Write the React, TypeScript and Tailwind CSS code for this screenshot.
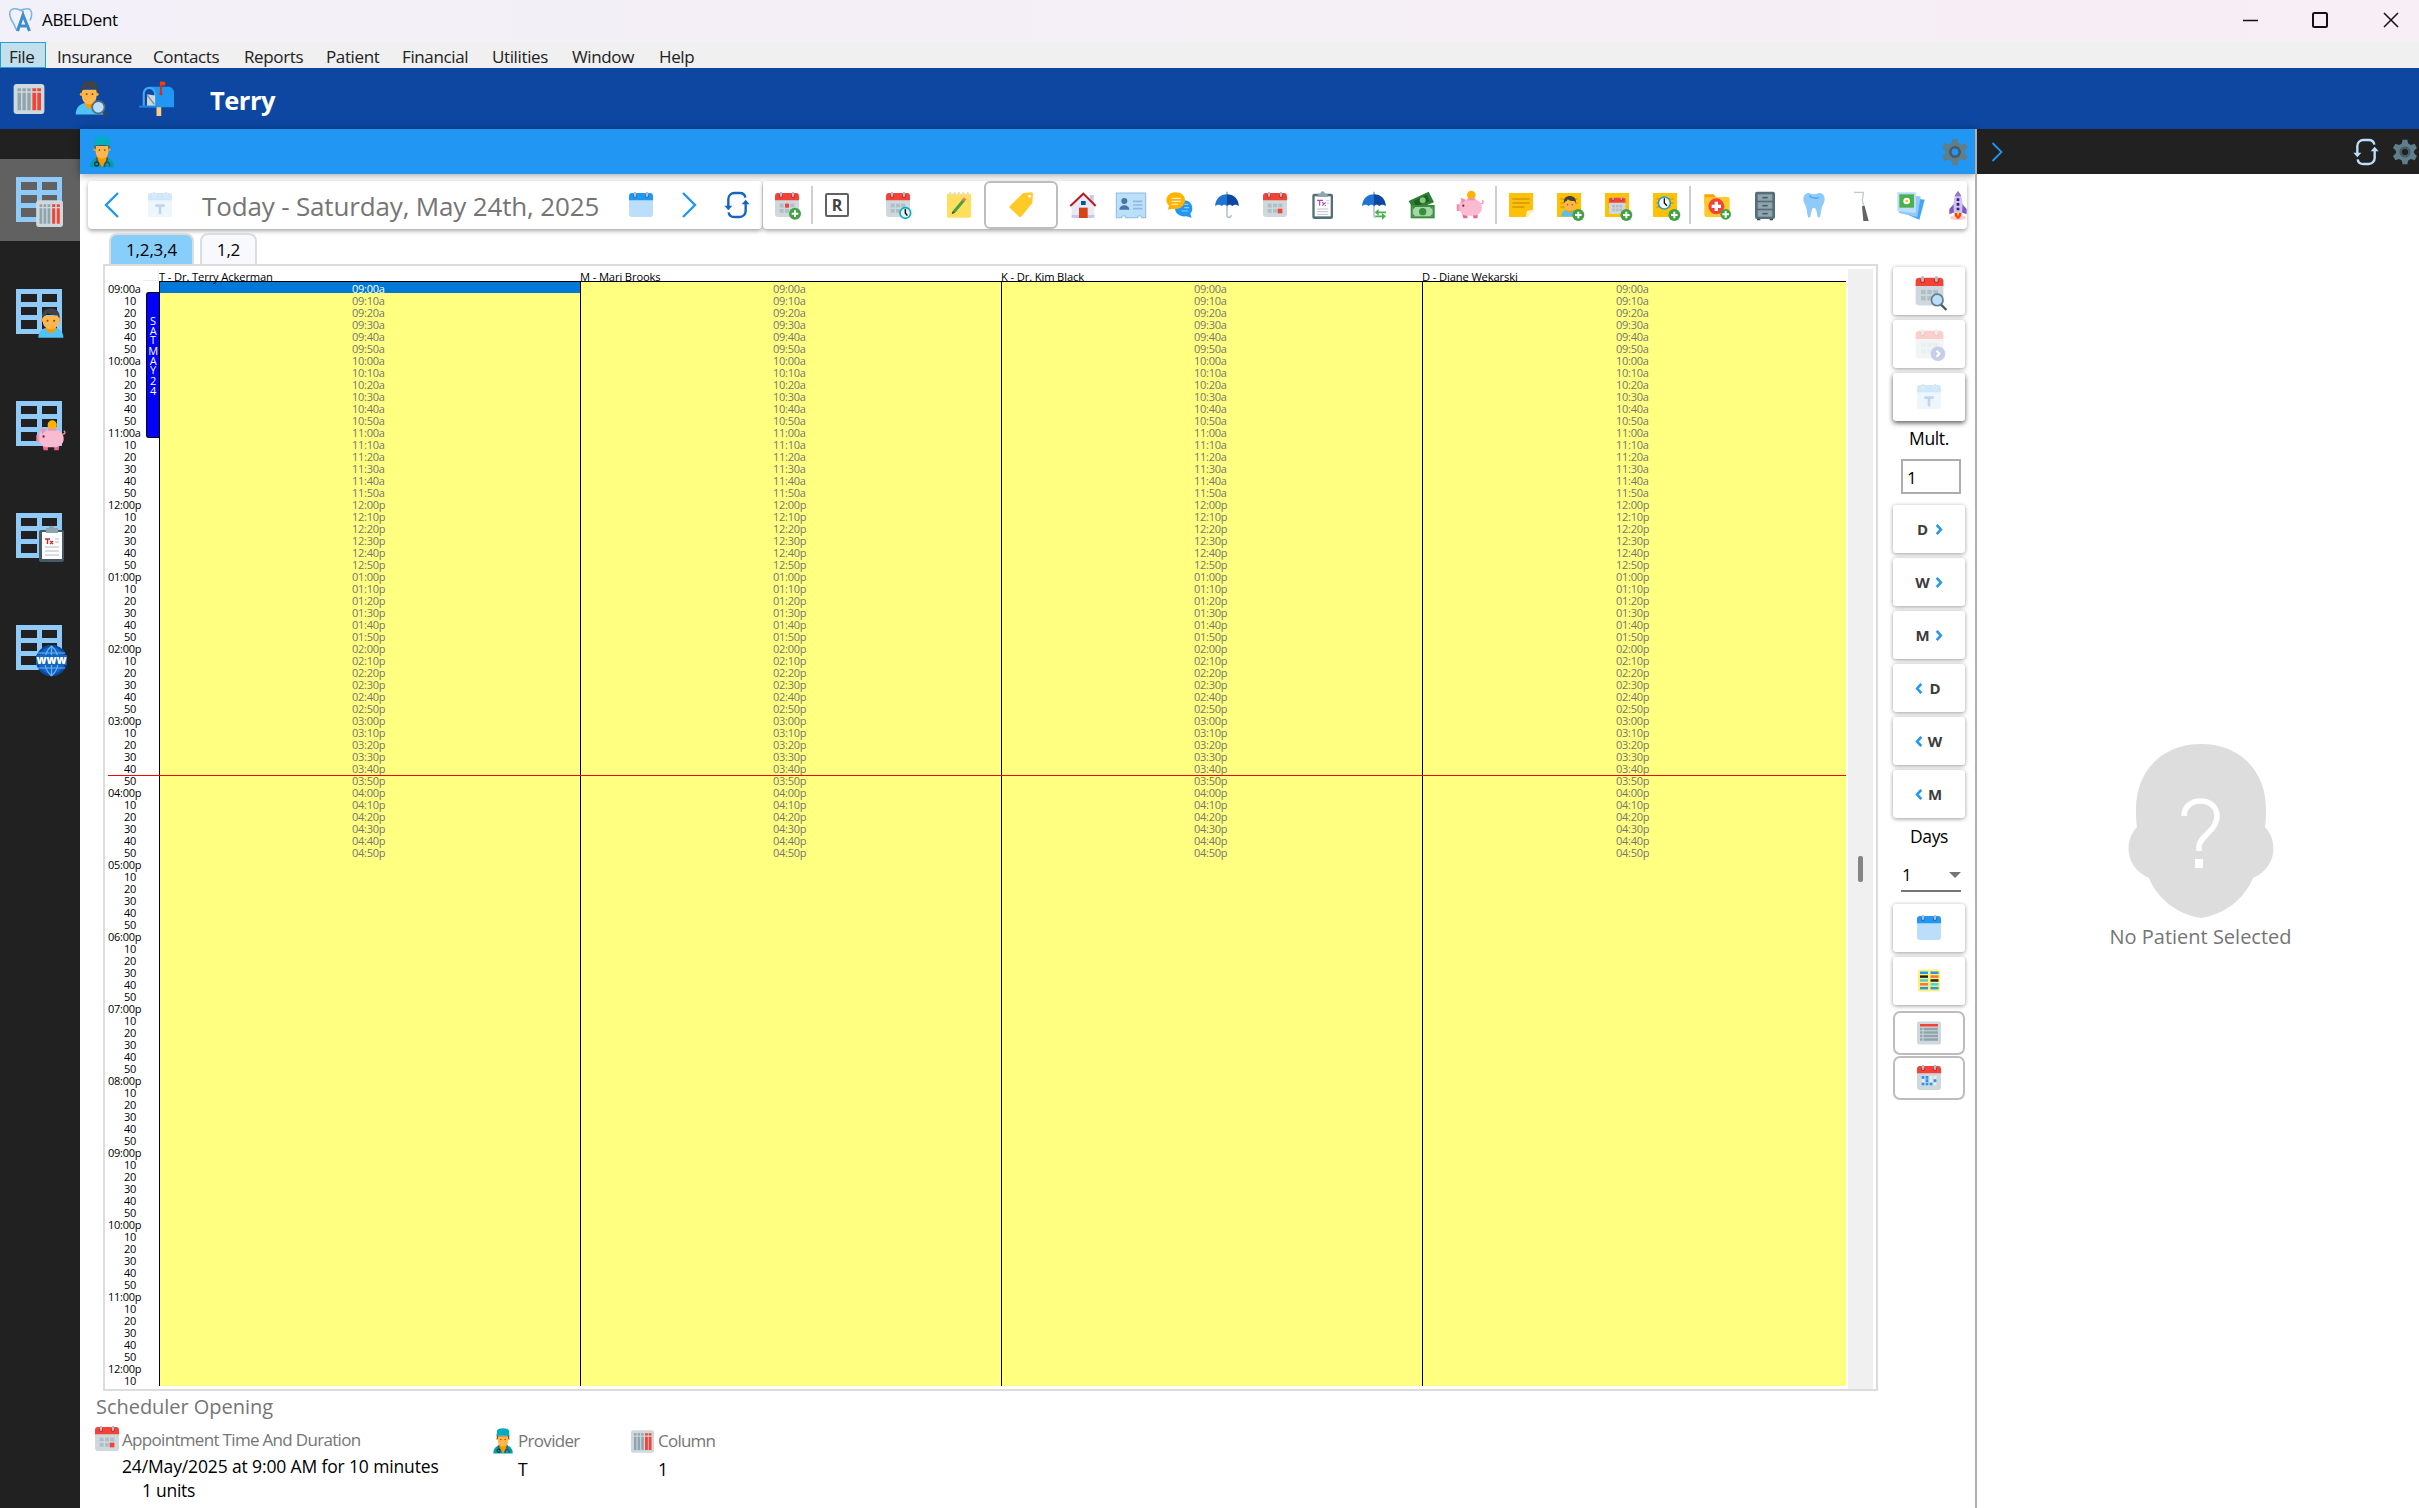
import React from "react";

type IconProps = { className?: string };

function Svg({ className = "size-8", children }: { className?: string; children: React.ReactNode }) {
  return (
    <svg viewBox="0 0 48 48" fill="none" className={`${className} shrink-0 overflow-visible`}>
      {children}
    </svg>
  );
}

/* ---------- icon parts ---------- */

function CalendarBase({ top = "#f44336", body = "#cfd8dc", ring = "#b0bec5", hole = "#b71c1c" }) {
  return (
    <>
      <path d="M6 38V14h36v24c0 2.200-1.800 4-4 4H10c-2.200 0-4-1.800-4-4z" fill={body} />
      <path d="M42 10v7H6v-7c0-2.200 1.800-4 4-4h28c2.200 0 4 1.800 4 4z" fill={top} />
      <circle cx="15" cy="10" r="3" fill={hole} />
      <circle cx="33" cy="10" r="3" fill={hole} />
      <rect x="13.200" y="4" width="3.600" height="8" rx="1.800" fill={ring} />
      <rect x="31.200" y="4" width="3.600" height="8" rx="1.800" fill={ring} />
    </>
  );
}

function CalendarCells({ color = "#b0bec5" }) {
  return (
    <g fill={color}>
      {[13, 21, 29].map((x) => (
        <React.Fragment key={x}>
          <rect x={x} y="22" width="6" height="5.500" />
          <rect x={x} y="30" width="6" height="5.500" />
        </React.Fragment>
      ))}
    </g>
  );
}

function PlusBadge({ cx = 37, cy = 37, r = 9 }) {
  return (
    <>
      <circle cx={cx} cy={cy} r={r} fill="#43a047" />
      <path d={`M${cx - 5} ${cy}h10M${cx} ${cy - 5}v10`} stroke="#fff" strokeWidth="3" />
    </>
  );
}

function PersonBody() {
  return (
    <>
      <path d="M5 46c0-9 5-14 12-15l7-1 7 1c7 1 12 6 12 15z" fill="#4fc3f7" />
      <path d="M17 26h14v8c-2 6-12 6-14 0z" fill="#ff9800" />
      <circle cx="12.500" cy="19" r="3" fill="#ffa726" />
      <circle cx="35.500" cy="19" r="3" fill="#ffa726" />
      <path d="M12 13h24v9c0 6-5 11-12 11s-12-5-12-11z" fill="#ffb74d" />
      <path d="M11 17C9 6 16 1 24 1s15 5 13 16l-3-5c-6 0-12-1-15-4-1 3-3 5-5 5z" fill="#424242" />
      <circle cx="19" cy="20" r="1.500" fill="#784719" />
      <circle cx="29" cy="20" r="1.500" fill="#784719" />
    </>
  );
}

/* ---------- icons ---------- */

function ColumnsIcon({ className }: IconProps) {
  return (
    <Svg className={className}>
      <rect x="3.500" y="4" width="41" height="40" rx="4" fill="#cfd8dc" />
      {[9, 15.5, 22].map((x) => (
        <path key={x} d={`M${x + 2} 9.5v4M${x + 2} 15.500v23.500`} stroke="#90a4ae" strokeWidth="4.500" />
      ))}
      {[28.5, 35].map((x) => (
        <path key={x} d={`M${x + 2.5} 9.5v4M${x + 2.5} 15.500v23.500`} stroke="#f44336" strokeWidth="5" />
      ))}
    </Svg>
  );
}

function PersonSearchIcon({ className }: IconProps) {
  return (
    <Svg className={className}>
      <path d="M1 46c0-9 5-13 10-15l9-2 9 2c6 2 10 6 10 15z" fill="#4fc3f7" />
      <path d="M14 26h12v8c-2 5-10 5-12 0z" fill="#ff9800" />
      <circle cx="9" cy="18" r="2.400" fill="#ffa726" />
      <circle cx="30" cy="18" r="2.400" fill="#ffa726" />
      <path d="M9.500 12h20v9c0 6-4 11-10 11s-10-5-10-11z" fill="#ffb74d" />
      <path d="M8.500 16C7 5 12 0 20 0s12.500 5 11 16l-2-5c-5 0-10-1-13-4-1 3-3 5-5 5z" fill="#424242" />
      <circle cx="16" cy="18" r="1.300" fill="#784719" />
      <circle cx="24" cy="18" r="1.300" fill="#784719" />
      <path d="M37 41l8 8" stroke="#37474f" strokeWidth="3.400" />
      <circle cx="32" cy="36" r="8.500" fill="#bbdefb" stroke="#546e7a" strokeWidth="2.500" />
    </Svg>
  );
}

function MailboxIcon({ className }: IconProps) {
  return (
    <Svg className={className}>
      <rect x="24" y="34" width="6.500" height="14" fill="#ffcc80" />
      <path d="M14 8h26c4.500 0 8 3.500 8 8v20H20z" fill="#2196f3" />
      <path d="M5 34V18c0-6 4-10 9-10s9 4 9 10v17z" fill="#42a5f5" />
      <path d="M8 34V18c0-4 2.500-7 6-7s6.500 3 6.500 7v16z" fill="#0d47a1" />
      <path d="M11 18l11 2v14H11z" fill="#cfd8dc" />
      <path d="M11 19l10 13" stroke="#78909c" strokeWidth="2" />
      <path d="M0 34h23v2.500H0z" fill="#1e88e5" />
      <path d="M30 17V1" stroke="#dd2c00" strokeWidth="2.600" />
      <circle cx="30" cy="17.500" r="2.200" fill="#dd2c00" />
      <path d="M28.700 1H36v5h-7.300z" fill="#ff3d00" />
    </Svg>
  );
}

function DoctorIcon({ className }: IconProps) {
  return (
    <Svg className={className}>
      <path d="M6 47c0-9 5-13 11-15h14c6 2 11 6 11 15z" fill="#00a0b0" />
      <path d="M16 29h16v4l-8 14-8-14z" fill="#ff9800" />
      <circle cx="13.500" cy="20" r="2.300" fill="#ffa726" />
      <circle cx="34.500" cy="20" r="2.300" fill="#ffa726" />
      <path d="M12.500 14h23l-.5 6h-22z" fill="#424242" />
      <path d="M14.500 15h19v9c0 5-4 10-9.500 10s-9.500-5-9.500-10z" fill="#ffb74d" />
      <path d="M13 4c2-5 20-5 22 0l1 11c-7-2-17-2-24 0z" fill="#00acc1" />
      <circle cx="20" cy="21" r="1.300" fill="#784719" />
      <circle cx="28" cy="21" r="1.300" fill="#784719" />
      <path d="M16 32l1 7M32 32l-1 6" stroke="#37474f" strokeWidth="2" />
      <circle cx="16" cy="42" r="3" stroke="#263238" strokeWidth="2" />
      <path d="M28 46c0-9 7-9 8 0" stroke="#37474f" strokeWidth="2" />
    </Svg>
  );
}

function GearIcon({ className }: IconProps) {
  return (
    <Svg className={className}>
      <path
        fillRule="evenodd"
        d="M20 3h8l1.500 6.500 4.500 2.500 6.500-2 4 7-5 4.800v4.400l5 4.800-4 7-6.500-2-4.500 2.500L28 45h-8l-1.500-6.500-4.500-2.500-6.500 2-4-7 5-4.800v-4.400L3.500 17l4-7 6.500 2 4.500-2.500zM24 18.500a5.500 5.500 0 1 0 0 11a5.500 5.500 0 0 0 0-11z"
        fill="#607d8b"
      />
      <circle cx="24" cy="24" r="7.500" stroke="#455a64" strokeWidth="4" />
    </Svg>
  );
}

function RefreshIcon({ className = "size-8 text-[#1565c0]" }: IconProps) {
  return (
    <Svg className={className}>
      <path
        d="M11 28V15c0-5 4-9 9-9h8c5 0 8 3 8.500 7M37 20v13c0 5-4 9-9 9h-8c-5 0-8-3-8.500-7"
        stroke="currentColor"
        strokeWidth="3.600"
      />
      <path d="M5 25h12l-6 7zM31 23h12l-6-7z" fill="currentColor" />
    </Svg>
  );
}

function ChevronIcon({ left = false, className = "size-8 text-[#2196f3]" }: { left?: boolean; className?: string }) {
  return (
    <Svg className={className}>
      <path d={left ? "M33 6L15 24l18 18" : "M15 6l18 18-18 18"} stroke="currentColor" strokeWidth="3.600" />
    </Svg>
  );
}

function BlueCalendarIcon({ className }: IconProps) {
  return (
    <Svg className={className}>
      <CalendarBase top="#2196f3" body="#bbdefb" hole="#1565c0" />
    </Svg>
  );
}

function TodayIcon({ className = "size-8" }: IconProps) {
  return (
    <Svg className={className}>
      <g opacity="0.26">
        <CalendarBase top="#42a5f5" body="#bbdefb" ring="#90a4ae" hole="#90caf9" />
        <path d="M17 25h14M24 25v13" stroke="#1565c0" strokeWidth="4" />
      </g>
    </Svg>
  );
}

function CalendarAddIcon() {
  return (
    <Svg>
      <CalendarBase />
      <CalendarCells />
      <rect x="21" y="22" width="6" height="6" fill="#f44336" />
      <PlusBadge cx={36} cy={37} />
    </Svg>
  );
}

function CalendarClockIcon() {
  return (
    <Svg>
      <CalendarBase />
      <CalendarCells />
      <circle cx="35" cy="36" r="8" fill="#eee" stroke="#00acc1" strokeWidth="2.500" />
      <path d="M35 30v6l3 4" stroke="#111" strokeWidth="2.200" />
    </Svg>
  );
}

function CalendarDayIcon({ className }: IconProps) {
  return (
    <Svg className={className}>
      <CalendarBase />
      <CalendarCells />
      <rect x="28" y="29.500" width="7" height="7" fill="#f44336" />
    </Svg>
  );
}

function RIcon() {
  return (
    <span className="flex size-6 items-center justify-center rounded-[2px] border-2 border-[#616161] text-[16px] leading-none font-bold text-[#424242]">
      R
    </span>
  );
}

function NotepadIcon() {
  return (
    <Svg>
      <rect x="6" y="7" width="36" height="36" rx="2" fill="#ffe05c" />
      {[11, 17.5, 24, 30.5, 37].map((x) => (
        <rect key={x} x={x - 1.5} y="4" width="3" height="7" rx="1.500" fill="#e8dfb0" />
      ))}
      <path d="M16 35l15-18" stroke="#43a047" strokeWidth="4.500" />
      <path d="M30 18l3-4" stroke="#e57373" strokeWidth="4.500" />
      <path d="M13 38l1.500-5 3 3z" fill="#37474f" />
    </Svg>
  );
}

function TagIcon() {
  return (
    <Svg>
      <path d="M27 6l12-1c2 0 3 1 3 3l-1 13-16 20c-1 1.500-3 1.500-4 .3L7.500 29c-1-1-1-2.800.2-4z" fill="#ffca28" />
      <circle cx="37" cy="11" r="2.200" fill="#fff" />
    </Svg>
  );
}

function HouseIcon() {
  return (
    <Svg>
      <path d="M34 9h6v12h-6z" fill="#c5cae9" />
      <path d="M24 8L7 24v19h34V24z" fill="#e8eaf6" />
      <path d="M7 39h34v4.500H7z" fill="#c5cae9" />
      <path d="M18 28h13v15.500H18z" fill="#d84315" />
      <path d="M21 18h7v6h-7z" fill="#01579b" />
      <path d="M5 25.500L24.500 7L43 25.500" stroke="#b71c1c" strokeWidth="3" />
    </Svg>
  );
}

function IdCardIcon() {
  return (
    <Svg>
      <path d="M2 6h44v37h-6c0-4-6-4-6 0H16c0-4-6-4-6 0H2z" fill="#bbe1fa" stroke="#8fbde0" strokeWidth="1.600" />
      <circle cx="14" cy="18" r="4.500" fill="#4a74a8" />
      <path d="M6.500 31c0-9 15-9 15 0z" fill="#4a74a8" />
      <path d="M27 18.500h14M27 24h14M27 29.500h14" stroke="#90b8e0" strokeWidth="2.400" />
    </Svg>
  );
}

function ChatIcon() {
  return (
    <Svg>
      <path d="M31 17c8 0 13 5 13 12 0 4-2 7-3 8l2 6-8-2c-10 1-17-4-17-12s5-12 13-12z" fill="#2196f3" />
      <path d="M32 23h6M32 28h7M28 33h10" stroke="#90caf9" strokeWidth="1.800" />
      <path d="M19 5c8 0 14 5 14 12s-6 13-14 13c-2 0-3 0-5-.5L7 31l2-6c-2-2-4-5-4-8C5 10 11 5 19 5z" fill="#ffb300" />
      <path d="M13 14h14M13 18.500h14M13 23h10" stroke="#ffecb3" strokeWidth="1.800" />
    </Svg>
  );
}

function UmbrellaIcon({ exchange = false }: { exchange?: boolean }) {
  return (
    <Svg>
      <path d="M24 22v17c0 5 6 5 6 0" stroke="#b0bec5" strokeWidth="2.200" />
      <path d="M24 4v5" stroke="#78909c" strokeWidth="1.800" />
      <path d="M6 26C7 14 14 8 24 8v18c-2-3-6-3-8 0-2-3-7-3-10 0z" fill="#1e74d0" />
      <path d="M42 26C41 14 34 8 24 8v18c2-3 6-3 8 0 2-3 7-3 10 0z" fill="#0d47a1" />
      {exchange && (
        <>
          <path d="M26 31h20v14H26z" fill="#fff" />
          <path d="M29 35h13M26 41h13" stroke="#4caf50" strokeWidth="2.600" />
          <path d="M31 30v10l-6-5zM36 36v10l6-5z" fill="#4caf50" />
        </>
      )}
    </Svg>
  );
}

function ClipboardIcon({ className }: IconProps) {
  return (
    <Svg className={className}>
      <rect x="8" y="7" width="31" height="38" rx="3" fill="#546e7a" />
      <rect x="11.500" y="11" width="24" height="30" fill="#fff" />
      <path d="M16 7h4c0-5 7-5 7 0h4v5H16z" fill="#90a4ae" />
      <path d="M15 17h9M19 17v8M23 20l5 5M28 20l-5 5" stroke="#ab47bc" strokeWidth="1.800" />
      <path d="M15 30h17M15 34h17M15 38h17M29 17h4M30 21h3" stroke="#b0bec5" strokeWidth="1.300" />
    </Svg>
  );
}

function MoneyIcon() {
  return (
    <Svg>
      <path d="M4 18L34 4l8 16-30 12z" fill="#2e7d32" />
      <path d="M12 18L31 9l4 9-20 8z" fill="#1b5e20" />
      <circle cx="25" cy="17" r="4.500" fill="#81c784" />
      <rect x="7" y="24" width="36" height="20" fill="#388e3c" />
      <rect x="10" y="27" width="30" height="14" fill="#a5d6a7" />
      <circle cx="25" cy="34" r="5.500" fill="#388e3c" />
      <path d="M10 27h4l-4 4zM40 27h-4l4 4zM10 41h4l-4-4zM40 41h-4l4-4z" fill="#388e3c" />
    </Svg>
  );
}

function PiggyParts() {
  return (
    <>
      <circle cx="26" cy="9" r="6.500" fill="#ffb300" />
      <path d="M12 35h8v9h-6zM28 35h8l-1 9h-6z" fill="#f06292" />
      <path d="M40 22c4 0 5-3 2-5" stroke="#f48fb1" strokeWidth="2" />
      <path
        d="M10 14l7 3c3-2 6-2 10-2 9 0 15 6 15 13s-6 12-14 12H19c-4 0-7-2-9-6l-5-2v-8l4-2c0-2 1-4 2-5z"
        fill="#f8bbd0"
      />
      <path d="M10 13l8 3-6 6zM4 23h4v10H4z" fill="#f48fb1" />
      <path d="M20 14h12v3H20z" fill="#f48fb1" />
      <circle cx="14" cy="25" r="1.600" fill="#880e4f" />
    </>
  );
}

function PiggyIcon() {
  return (
    <Svg>
      <PiggyParts />
    </Svg>
  );
}

function NoteBase() {
  return (
    <>
      <path d="M6 6h36v36H6z" fill="#ffc107" />
      <path d="M11 15h26M11 21h26M11 27h20" stroke="#c69000" strokeWidth="1.800" />
    </>
  );
}

function NoteIcon() {
  return (
    <Svg>
      <path d="M6 6h36v27l-9 9H6z" fill="#ffc107" />
      <path d="M11 15h26M11 21h26M11 27h18" stroke="#b98500" strokeWidth="1.800" />
      <path d="M31 42l2-9 9-2v2l-9 9z" fill="#fff3c4" />
    </Svg>
  );
}

function NotePersonIcon() {
  return (
    <Svg>
      <NoteBase />
      <g transform="translate(9 10) scale(0.68)">
        <PersonBody />
      </g>
      <PlusBadge cx={38} cy={39} />
    </Svg>
  );
}

function NoteCalendarIcon() {
  return (
    <Svg>
      <NoteBase />
      <g transform="translate(8 9) scale(0.68)">
        <CalendarBase />
        <CalendarCells />
      </g>
      <PlusBadge cx={38} cy={39} />
    </Svg>
  );
}

function NoteClockIcon() {
  return (
    <Svg>
      <NoteBase />
      <circle cx="23" cy="21" r="9" fill="#f5f5f5" stroke="#26a0c0" strokeWidth="2.500" />
      <path d="M23 14v7l4 4" stroke="#111" strokeWidth="2" />
      <PlusBadge cx={38} cy={39} />
    </Svg>
  );
}

function FolderPlusIcon() {
  return (
    <Svg>
      <path d="M5 8h14l4 5h19v10H5z" fill="#ffa000" />
      <rect x="5" y="12" width="38" height="30" rx="3" fill="#ffca28" />
      <circle cx="23" cy="26" r="12" fill="#f44336" />
      <path d="M16 26h14M23 19v14" stroke="#fff" strokeWidth="5" />
      <PlusBadge cx={37} cy={38} r={8} />
    </Svg>
  );
}

function CabinetIcon() {
  return (
    <Svg>
      <rect x="9" y="4" width="30" height="41" rx="3" fill="#546e7a" />
      {[8, 20, 32].map((y) => (
        <g key={y}>
          <rect x="13" y={y} width="22" height="9.500" fill="#90a4ae" />
          <path d={`M20 ${y + 5}h8`} stroke="#455a64" strokeWidth="2.400" />
        </g>
      ))}
      <path d="M12 45h5v2h-5zM31 45h5v2h-5z" fill="#37474f" />
    </Svg>
  );
}

function ToothIcon() {
  return (
    <Svg>
      <path
        d="M16 6c3 0 5 2 8 2s5-2 8-2c5 0 8 4 8 9 0 6-4 9-5 16-1 5-1 12-4 12s-2-15-7-15-4 15-7 15-3-7-4-12c-1-7-5-10-5-16 0-5 3-9 8-9z"
        fill="#90caf9"
      />
      <path d="M17 10c3 3 8 5 14 3" stroke="#42a5f5" strokeWidth="2" />
    </Svg>
  );
}

function ProbeIcon() {
  return (
    <Svg>
      <path d="M12 5h14c1 5-3 10-1 15l3 8" stroke="#c4c9cc" strokeWidth="2" />
      <path d="M24 25l4 1 6 22h-8z" fill="#616161" />
    </Svg>
  );
}

function PhotosIcon() {
  return (
    <Svg>
      <path d="M20 12l26 4-8 30-26-11z" fill="#42a5f5" />
      <path d="M12 10l28 1-5 31-28-6z" fill="#90caf9" />
      <path d="M5 5h28v30l-5 1-23-3z" fill="#bbdefb" />
      <rect x="8" y="8" width="22" height="20" fill="#4caf50" />
      <circle cx="19" cy="18" r="5" fill="#fff" />
      <circle cx="19" cy="18" r="2" fill="#ffc107" />
    </Svg>
  );
}

function RocketIcon() {
  return (
    <Svg>
      <ellipse cx="24" cy="43" rx="12" ry="4" fill="#ffcdd2" />
      <path d="M18 22l-7 8v8l8-3zM30 22l7 8v8l-8-3z" fill="#7e57c2" />
      <path d="M24 3c6 7 8 15 6 33H18C16 18 18 10 24 3z" fill="#d1c4e9" />
      <path d="M24 3c2 2.500 4 5.500 5 8H19c1-2.500 3-5.500 5-8z" fill="#9575cd" />
      <path d="M24 14v4M24 21v4M24 28v4" stroke="#311b92" strokeWidth="4" />
      <path d="M19 36h10c1 4-3 8-5 9-2-1-6-5-5-9z" fill="#ff3d00" />
      <path d="M22 36h4l-2 6z" fill="#ffca28" />
    </Svg>
  );
}

function CalendarSearchIcon({ className = "size-[37px]" }: IconProps) {
  return (
    <Svg className={className}>
      <CalendarBase />
      <CalendarCells />
      <path d="M38 40l8 8" stroke="#455a64" strokeWidth="3" />
      <circle cx="34" cy="35" r="7.500" fill="#bbdefb" stroke="#607d8b" strokeWidth="2.200" />
    </Svg>
  );
}

function CalendarNextIcon({ className = "size-[37px]" }: IconProps) {
  return (
    <Svg className={className}>
      <g opacity="0.25">
        <CalendarBase />
        <CalendarCells />
      </g>
      <circle cx="35" cy="36" r="9.500" fill="#c5cfe8" />
      <path d="M33 32l4 4-4 4" stroke="#fff" strokeWidth="2.600" />
    </Svg>
  );
}

function ColorColumnsIcon() {
  const rows = [
    ["#2196f3", "#2196f3"],
    ["#212121", "#ff7043"],
    ["#4dd0e1", "#212121"],
    ["#ff7043", "#4dd0e1"],
    ["#2196f3", "#2196f3"],
  ];
  return (
    <Svg className="size-6">
      <rect x="2" y="1" width="44" height="44" rx="4" fill="#fff176" />
      {rows.map(([a, b], i) => (
        <g key={i}>
          <rect x="6" y={5 + i * 7.7} width="16" height="5" fill={a} />
          <rect x="27" y={5 + i * 7.7} width="16" height="5" fill={b} />
        </g>
      ))}
    </Svg>
  );
}

function ListIcon() {
  return (
    <Svg className="size-6">
      <rect x="0" y="1" width="48" height="46" rx="4" fill="#cfd8dc" />
      <rect x="6" y="6" width="36" height="5" fill="#f44336" />
      {[13, 20, 27, 34].map((y) => (
        <path key={y} d={`M6 ${y + 3}h5M13 ${y + 3}h29`} stroke="#90a4ae" strokeWidth="5" />
      ))}
    </Svg>
  );
}

function MonthIcon() {
  return (
    <Svg className="size-8">
      <CalendarBase />
      <g fill="#2196f3">
        <path d="M13 21h4v4h-4zM19 21h4v4h-4zM19 26h4v4h-4zM13 31h4v4h-4zM19 31h4v4h-4zM25 31h4v4h-4zM31 26h4v4h-4z" />
      </g>
      <path d="M25 21h4v4h-4zM31 21h4v4h-4zM13 26h4v4h-4zM25 26h4v4h-4zM31 31h4v4h-4z" fill="#eceff1" />
    </Svg>
  );
}

function LogoIcon() {
  return (
    <Svg className="size-6">
      <path
        d="M9 31C2 22-1 9 4 4c5-4 11-3 18 0 3 1 5 3 8 4M21 4c8 0 15-5 21-1 5 4 4 14 0 22M9 31c3 4 3 10 7 14"
        stroke="#7bb6e0"
        strokeWidth="3.200"
      />
      <path d="M17 46l11-32 13 32M22 36h15" stroke="#3b8fd0" strokeWidth="6" />
    </Svg>
  );
}

/* ---------- side navigation ---------- */

function NavGrid({ children }: { children: React.ReactNode }) {
  return (
    <svg viewBox="0 0 54 52" fill="none" className="h-[52px] w-[54px]">
      <path
        fillRule="evenodd"
        fill="#90caf9"
        d="M0 0h46v45H0zM5 5v8h16V5zM26 5v8h15V5zM5 18v8h16v-8zM26 18v8h15v-8zM5 31v9h16v-9zM26 31v9h15v-9z"
      />
      {children}
    </svg>
  );
}

const navItems = [
  <NavGrid key="cols">
    <g transform="translate(17.500 20.500) scale(0.67)">
      <rect x="4" y="4" width="40" height="40" rx="4" fill="#cfd8dc" />
      <path d="M11 10v4M17 10v4M23 10v4M11 16v23M17 16v23M23 16v23" stroke="#90a4ae" strokeWidth="4" />
      <path d="M30 10v4M37 10v4M30 16v23M37 16v23" stroke="#f44336" strokeWidth="4.500" />
    </g>
  </NavGrid>,
  <NavGrid key="person">
    <g transform="translate(19 18.500) scale(0.66)">
      <PersonBody />
    </g>
  </NavGrid>,
  <NavGrid key="piggy">
    <g transform="translate(17.500 17.500) scale(0.72)">
      <PiggyParts />
    </g>
  </NavGrid>,
  <NavGrid key="clip">
    <rect x="23" y="17" width="25" height="32" rx="2" fill="#455a64" />
    <rect x="26" y="19" width="20" height="27" fill="#fff" />
    <path d="M30 15h3c0-3 5-3 5 0h4v5H30z" fill="#90a4ae" />
    <path d="M29 26h5M31.500 26v5M34 28l3 3M37 28l-3 3" stroke="#c62828" strokeWidth="1.400" />
    <path d="M39 26h4M39 29h4M29 34h14M29 38h14M29 42h14" stroke="#b0bec5" strokeWidth="1.200" />
  </NavGrid>,
  <NavGrid key="www">
    <circle cx="35.500" cy="35.500" r="15.500" fill="#1565c0" />
    <circle cx="35.500" cy="35.500" r="14.500" stroke="#0d47a1" strokeWidth="2" />
    <path
      d="M35.500 21v30M22 28h27M22 43h27M35.500 21c-9 8-9 22 0 30M35.500 21c9 8 9 22 0 30"
      stroke="#64b5f6"
      strokeWidth="1.200"
    />
    <rect x="20" y="30" width="31" height="10" fill="#1565c0" />
    <text
      x="35.500"
      y="38.500"
      textAnchor="middle"
      fontSize="12"
      fontWeight="800"
      fill="#fff"
      textLength="30"
      lengthAdjust="spacingAndGlyphs"
    >
      www
    </text>
  </NavGrid>,
];

/* ---------- schedule ---------- */

const pad = (n: number) => String(n).padStart(2, "0");
const clock = (slot: number) => {
  const hour = 9 + Math.floor(slot / 6);
  return `${pad(hour > 12 ? hour - 12 : hour)}:${pad((slot % 6) * 10)}${hour >= 12 ? "p" : "a"}`;
};
const sideLabels = Array.from({ length: 92 }, (_, i) => {
  if (i % 6) return String((i % 6) * 10);
  return i === 90 ? "12:00p" : clock(i);
});
const openSlots = Array.from({ length: 48 }, (_, i) => clock(i));
const providers = ["T - Dr. Terry Ackerman", "M - Mari Brooks", "K - Dr. Kim Black", "D - Diane Wekarski"];

function Schedule() {
  return (
    <div className="relative flex h-[1127px] w-[1775px] border-2 border-[#dcdcdc] bg-white text-[11px] tracking-[-0.025em]">
      <div className="relative w-[54px] shrink-0 pt-[17px] font-medium text-black">
        {sideLabels.map((label, i) => (
          <div key={i} className={label.length > 2 ? "h-3 pl-[3px] leading-3" : "h-3 pl-[19px] leading-3"}>
            {label}
          </div>
        ))}
        <div className="absolute top-[3px] right-0 h-3 w-4 border-r border-b border-[#ececec]" />
        <div className="absolute top-[26px] right-0 flex h-[146px] w-[13px] flex-col items-center rounded-l-[3px] border border-r-0 border-black bg-[#0000ff] pt-[23px] text-[11px] text-white">
          {["S", "A", "T", "M", "A", "Y", "2", "4"].map((c, i) => (
            <span key={i} className={i === 3 || i === 6 ? "mt-px h-[10px] leading-[10px]" : "h-[9.500px] leading-[10px]"}>
              {c}
            </span>
          ))}
        </div>
      </div>
      <div className="flex w-[1687px] shrink-0">
        {providers.map((name, c) => (
          <div key={name} className={c === 3 ? "w-[424px]" : "w-[421px]"}>
            <div className="h-[15px] pt-[3px] text-[11.200px] leading-4 font-medium tracking-[-0.012em] whitespace-nowrap text-black">
              {name}
            </div>
            <div
              className={
                c === 3
                  ? "h-[1105px] border-t border-l border-black bg-[#ffff80] pl-[193px] text-[#757575]"
                  : "h-[1105px] border-t border-l border-black bg-[#ffff80] pl-[192px] text-[#757575]"
              }
            >
              {openSlots.map((t, i) => {
                if (i === 0)
                  return (
                    <div
                      key={t}
                      className={
                        c === 0
                          ? "mb-[2px] -ml-[192px] h-[11px] bg-[#0078d7] pl-[192px] leading-[14px] text-white"
                          : "mb-[2px] h-[11px] leading-[14px]"
                      }
                    >
                      {t}
                    </div>
                  );
                return (
                  <div key={t} className="h-3 leading-3">
                    {t}
                  </div>
                );
              })}
            </div>
          </div>
        ))}
      </div>
      <div className="mt-[3px] ml-[2px] flex h-[1120px] w-[25px] items-center justify-center bg-[#f0f0f0]">
        <div className="mt-[80px] h-[26px] w-[5px] rounded-[2px] bg-[#858585]" />
      </div>
      <div className="absolute top-[509px] left-[3px] h-px w-[1738px] bg-[#ff0000]" />
    </div>
  );
}

/* ---------- toolbar ---------- */

function Cell({ className = "w-12", children }: { className?: string; children: React.ReactNode }) {
  return <div className={`${className} flex h-12 shrink-0 items-center justify-center`}>{children}</div>;
}

function Sep({ className = "" }: IconProps) {
  return <div className={`${className} h-[38px] w-[2px] shrink-0 bg-[#cfcfcf]`} />;
}

function Toolbar() {
  return (
    <div className="ml-2 flex h-12">
      <div className="flex h-12 w-[674px] items-center rounded bg-white shadow-[0_2px_4px_rgba(0,0,0,0.35)]">
        <Cell><ChevronIcon left /></Cell>
        <Cell><TodayIcon /></Cell>
        <div className="w-[433px] pt-[2px] pl-[18px] text-[26px] leading-9 tracking-[-0.006em] whitespace-nowrap text-[#757575]">
          Today - Saturday, May 24th, 2025
        </div>
        <Cell><BlueCalendarIcon /></Cell>
        <Cell><ChevronIcon /></Cell>
        <Cell><RefreshIcon /></Cell>
      </div>
      <div className="ml-px h-12 w-[1204px] rounded bg-white shadow-[0_2px_4px_rgba(0,0,0,0.35)]">
        <div className="flex h-12 w-[1204px] items-center overflow-hidden">
          <Cell><CalendarAddIcon /></Cell>
          <Sep />
          <Cell><RIcon /></Cell>
          <Cell className="ml-[13px] w-12"><CalendarClockIcon /></Cell>
          <Cell className="ml-[13px] w-12"><NotepadIcon /></Cell>
          <div className="ml-px flex h-12 w-[74px] shrink-0 items-center justify-center rounded-md border-2 border-[#bdbdbd]">
            <TagIcon />
          </div>
          <Cell className="ml-px w-12"><HouseIcon /></Cell>
          <Cell><IdCardIcon /></Cell>
          <Cell><ChatIcon /></Cell>
          <Cell><UmbrellaIcon /></Cell>
          <Cell><CalendarDayIcon /></Cell>
          <Cell><ClipboardIcon /></Cell>
          <Cell className="ml-[3px] w-12"><UmbrellaIcon exchange /></Cell>
          <Cell><MoneyIcon /></Cell>
          <Cell><PiggyIcon /></Cell>
          <Sep className="ml-px" />
          <Cell><NoteIcon /></Cell>
          <Cell><NotePersonIcon /></Cell>
          <Cell><NoteCalendarIcon /></Cell>
          <Cell><NoteClockIcon /></Cell>
          <Sep />
          <Cell className="ml-[2px] w-12"><FolderPlusIcon /></Cell>
          <Cell><CabinetIcon /></Cell>
          <Cell className="ml-px w-12"><ToothIcon /></Cell>
          <Cell><ProbeIcon /></Cell>
          <Cell><PhotosIcon /></Cell>
          <Cell><RocketIcon /></Cell>
        </div>
      </div>
    </div>
  );
}

/* ---------- right tool column ---------- */

function ToolButton({ className = "", children }: { className?: string; children: React.ReactNode }) {
  return (
    <div
      className={`${className} flex h-12 w-[72px] items-center justify-center rounded-[3px] bg-white shadow-[0_1px_4px_rgba(0,0,0,0.4)]`}
    >
      {children}
    </div>
  );
}

function SmallChevron({ left = false }: { left?: boolean }) {
  return (
    <svg viewBox="0 0 8 12" fill="none" className="h-[11px] w-2">
      <path d={left ? "M6.500 1L2 6l4.500 5" : "M1.500 1L6 6l-4.500 5"} stroke="#2196f3" strokeWidth="2.800" />
    </svg>
  );
}

function ToolColumn() {
  return (
    <div className="ml-[15px] flex w-[72px] flex-col items-center pt-[3px] text-black">
      <ToolButton><CalendarSearchIcon /></ToolButton>
      <ToolButton className="mt-[5px]"><CalendarNextIcon /></ToolButton>
      <div className="mt-[5px] flex h-12 w-[72px] items-center justify-center rounded-[3px] bg-white shadow-[0_2px_5px_rgba(0,0,0,0.65)]">
        <TodayIcon />
      </div>
      <div className="mt-[5px] h-6 text-[17.500px] leading-6 tracking-[-0.02em]">Mult.</div>
      <div className="mt-[9px] ml-[4px] h-[35px] w-[60px] border-2 border-[#abadb3] pl-[4px] text-[17px] leading-[33px]">1</div>
      <div className="mt-[11px] flex flex-col gap-[5px] text-[15px] font-bold text-[#3c3c3c]">
        {["D", "W", "M"].map((c) => (
          <ToolButton key={c} className="gap-[5px]">
            <span className="w-[15px] text-center">{c}</span>
            <SmallChevron />
          </ToolButton>
        ))}
        {["D", "W", "M"].map((c) => (
          <ToolButton key={c} className="gap-[4px]">
            <SmallChevron left />
            <span className="w-[16px] text-center">{c}</span>
          </ToolButton>
        ))}
      </div>
      <div className="mt-[6px] h-6 text-[17.500px] leading-6 tracking-[-0.02em]">Days</div>
      <div className="mt-[11px] ml-[4px] flex h-[33px] w-[60px] items-center justify-between border-b-2 border-[#757575] pt-px pl-px text-[17px]">
        <span>1</span>
        <svg viewBox="0 0 12 6" className="h-[6px] w-3">
          <path d="M0 0h12L6 6z" fill="#757575" />
        </svg>
      </div>
      <ToolButton className="mt-[12px]"><BlueCalendarIcon /></ToolButton>
      <ToolButton className="mt-[5px]"><ColorColumnsIcon /></ToolButton>
      <div className="mt-[6px] flex h-[44px] w-[72px] items-center justify-center rounded-[7px] border-2 border-[#bdbdbd]">
        <ListIcon />
      </div>
      <div className="mt-px flex h-[44px] w-[72px] items-center justify-center rounded-[7px] border-2 border-[#bdbdbd]">
        <MonthIcon />
      </div>
    </div>
  );
}

/* ---------- footer ---------- */

function Details() {
  return (
    <div className="pt-px pl-[11px] text-[17px] tracking-[-0.04em] text-black">
      <div className="pl-[5px] text-[20px] leading-[30px] tracking-[-0.002em] text-[#757575]">Scheduler Opening</div>
      <div className="flex whitespace-nowrap">
        <div className="flex w-[396px] pt-px">
          <CalendarDayIcon />
          <div className="-ml-px pt-[2px]">
            <div className="leading-[29px] text-[#757575]">Appointment Time And Duration</div>
            <div className="text-[17.500px] leading-[25px] tracking-[-0.008em]">24/May/2025 at 9:00 AM for 10 minutes</div>
            <div className="pl-[20px] text-[17.500px] leading-[23px] tracking-[-0.015em]">1 units</div>
          </div>
        </div>
        <div className="flex w-[139px] pt-[4px]">
          <DoctorIcon className="mt-[2px] mr-[3px] ml-[3px] size-[26px]" />
          <div className="-ml-px">
            <div className="leading-[30px] text-[#757575]">Provider</div>
            <div className="text-[17.500px] leading-[26px]">T</div>
          </div>
        </div>
        <div className="flex pt-[4px]">
          <ColumnsIcon className="mt-[2px] mr-[2px] ml-[3px] size-[27px]" />
          <div>
            <div className="leading-[30px] tracking-[-0.045em] text-[#757575]">Column</div>
            <div className="text-[17.500px] leading-[26px]">1</div>
          </div>
        </div>
      </div>
    </div>
  );
}

/* ---------- patient panel ---------- */

function PatientPanel() {
  return (
    <div className="flex w-[442px] flex-col bg-white">
      <div className="flex h-[45px] items-center bg-[#212121]">
        <ChevronIcon className="ml-[8px] size-6 text-[#2196f3]" />
        <div className="flex-1" />
        <RefreshIcon className="mr-[9px] size-8 text-[#bbdefb]" />
        <GearIcon className="size-7" />
      </div>
      <div className="flex flex-col items-center pt-[569px] pl-[5px]">
        <svg viewBox="0 0 146 175" fill="none" className="h-[175px] w-[146px]">
          <path
            d="M73 1c39 0 65 27 65 65 0 6 0 12-1 18 14 15 11 41-12 51-9 22-30 37-52 40-22-3-43-18-52-40C-2 125-5 99 9 84c-1-6-1-12-1-18C8 28 34 1 73 1z"
            fill="#dddddd"
          />
          <path d="M56 73c0-20 33-20 33 0 0 15-18 20-18 31v4" stroke="#fff" strokeWidth="5.500" />
          <rect x="67" y="116" width="8" height="9" fill="#fff" />
        </svg>
        <div className="text-[20px] leading-[38px] tracking-[0em] text-[#757575]">No Patient Selected</div>
      </div>
    </div>
  );
}

const menu: [string, string][] = [
  ["Insurance", "w-[96px]"],
  ["Contacts", "w-[91px]"],
  ["Reports", "w-[82px]"],
  ["Patient", "w-[76px]"],
  ["Financial", "w-[90px]"],
  ["Utilities", "w-[80px]"],
  ["Window", "w-[87px]"],
  ["Help", "w-[60px]"],
];

export default function App() {
  return (
    <div className="flex h-[1508px] w-[2419px] flex-col overflow-hidden bg-white font-['Open_Sans','Noto_Sans',sans-serif]">
      <div className="flex h-[42px] items-center bg-linear-to-r from-[#f2f0f8] to-[#f8eef5] pb-[3px]">
        <div className="ml-[9px]"><LogoIcon /></div>
        <div className="ml-[9px] text-[17px] tracking-[-0.02em] text-black">ABELDent</div>
        <div className="flex-1" />
        <svg viewBox="0 0 156 16" fill="none" stroke="#111" strokeWidth="1.500" className="mr-[20px] h-4 w-[156px]">
          <path d="M0 8.500h15M141 1l14 14M155 1l-14 14" />
          <rect x="70" y="1" width="14" height="14" rx="1.500" strokeWidth="2" />
        </svg>
      </div>
      <div className="flex h-[26px] bg-[#f0f0f0] text-[17px] leading-[29px] tracking-[-0.022em] text-[#212121]">
        <div className="mr-[11px] w-[46px] border border-[#26a0da] bg-[#c3dfec] pl-2 leading-[27px]">File</div>
        {menu.map(([label, width]) => (
          <div key={label} className={width}>{label}</div>
        ))}
      </div>
      <div className="flex h-[61px] items-center bg-[#0d47a1]">
        <ColumnsIcon className="ml-[11px] size-9" />
        <PersonSearchIcon className="ml-[28px] size-[35px]" />
        <MailboxIcon className="ml-[29px] size-[35px]" />
        <div className="ml-[36px] pt-[4px] text-[25.500px] font-bold tracking-[-0.02em] text-white">Terry</div>
      </div>
      <div className="flex h-[1379px]">
        <div className="w-20 shrink-0 bg-[#212121] pt-[30px]">
          {navItems.map((item, i) => (
            <div
              key={i}
              className={
                i === 0 ? "h-[82px] bg-[#616161] pt-[18px] pl-4" : "mt-[30px] h-[82px] pt-[18px] pl-4"
              }
            >
              {item}
            </div>
          ))}
        </div>
        <div className="w-[1895px] shrink-0 bg-white">
          <div className="flex h-[45px] items-center justify-between bg-[#2196f3] pr-[5px] pl-[6px] shadow-[0_1px_8px_rgba(0,0,0,0.4)]">
            <DoctorIcon className="size-8" />
            <GearIcon className="size-[30px]" />
          </div>
          <div className="pt-[7px]"><Toolbar /></div>
          <div className="mt-1 ml-[29px] flex h-[31px] gap-[6px] text-[17px] leading-[29px] tracking-[-0.01em] text-black">
            <div className="w-[85px] rounded-t-lg border-2 border-b-0 border-[#dcdcdc] bg-[#87cefa] text-center">1,2,3,4</div>
            <div className="w-[57px] rounded-t-lg border-2 border-b-0 border-[#dcdcdc] bg-[#f8f8ff] text-center">1,2</div>
          </div>
          <div className="ml-[23px] flex h-[1127px]">
            <Schedule />
            <ToolColumn />
          </div>
          <Details />
        </div>
        <div className="w-[2px] shrink-0 bg-[#b0b0b0]" />
        <PatientPanel />
      </div>
    </div>
  );
}
